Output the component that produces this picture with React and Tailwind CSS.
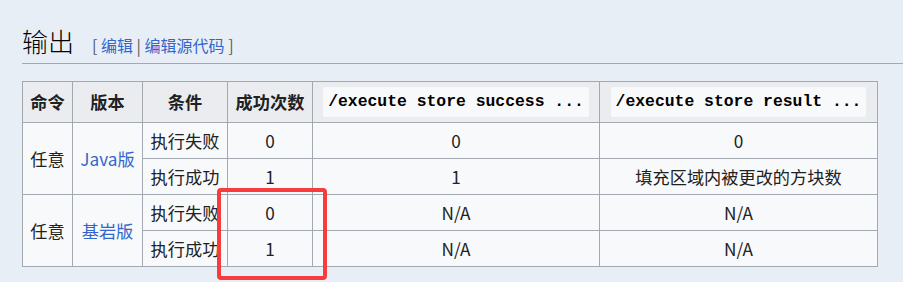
import React from "react";

const sans = { fontFamily: '"Noto Sans CJK SC", "Noto Sans", sans-serif' };

const th = "border border-[#a2a9b1] bg-[#eaecf0] font-bold text-center px-[4px] whitespace-nowrap";
const td = "border border-[#a2a9b1] bg-[#f8f9fa] text-center px-[4px] whitespace-nowrap";

function Code({ children }) {
  return (
    <code className="inline-block rounded-[2px] bg-[#f8f9fa] px-[5px] py-[3px] font-['Liberation_Mono',monospace] text-[16.4px] font-bold leading-[24px] text-[#000] whitespace-nowrap">
      {children}
    </code>
  );
}

export default function App() {
  return (
    <div className="min-h-[282px] w-[903px] bg-[#e8eef5] pt-[22px] text-[#202122] font-['Noto_Sans_CJK_SC','Noto_Sans',sans-serif]">
      <div className="ml-[22px] flex items-baseline border-b border-[#a2a9b1] pb-[3px]">
        <h2 className="text-[26px] font-light leading-[38px] text-[#000]">输出</h2>
        <span className="ml-[18px] text-[16px] text-[#54595d]">
          [ <span className="text-[#3366cc]">编辑</span> | <span className="text-[#3366cc]">编辑源代码</span> ]
        </span>
      </div>

      <div className="relative ml-[22px] mt-[17px]">
        <table className="w-[855px] table-fixed border-collapse text-[17.2px] leading-[24px]" style={sans}>
          <colgroup>
            <col className="w-[50px]" />
            <col className="w-[70px]" />
            <col className="w-[85px]" />
            <col className="w-[85px]" />
            <col className="w-[287px]" />
            <col className="w-[278px]" />
          </colgroup>
          <thead>
            <tr className="h-[41px]">
              <th className={th}>命令</th>
              <th className={th}>版本</th>
              <th className={th}>条件</th>
              <th className={th}>成功次数</th>
              <th className={th}><Code>/execute store success ...</Code></th>
              <th className={th}><Code>/execute store result ...</Code></th>
            </tr>
          </thead>
          <tbody>
            <tr className="h-[36px]">
              <td rowSpan={2} className={td}>任意</td>
              <td rowSpan={2} className={td + " text-[#3366cc]"}>Java版</td>
              <td className={td}>执行失败</td>
              <td className={td}>0</td>
              <td className={td}>0</td>
              <td className={td}>0</td>
            </tr>
            <tr className="h-[36px]">
              <td className={td}>执行成功</td>
              <td className={td}>1</td>
              <td className={td}>1</td>
              <td className={td}>填充区域内被更改的方块数</td>
            </tr>
            <tr className="h-[36px]">
              <td rowSpan={2} className={td}>任意</td>
              <td rowSpan={2} className={td + " text-[#3366cc]"}>基岩版</td>
              <td className={td}>执行失败</td>
              <td className={td}>0</td>
              <td className={td}>N/A</td>
              <td className={td}>N/A</td>
            </tr>
            <tr className="h-[36px]">
              <td className={td}>执行成功</td>
              <td className={td}>1</td>
              <td className={td}>N/A</td>
              <td className={td}>N/A</td>
            </tr>
          </tbody>
        </table>
        <div className="pointer-events-none absolute left-[195px] top-[107px] h-[92px] w-[110px] rounded-[4px] border-[4px] border-[#f63c3c]" />
      </div>
    </div>
  );
}
